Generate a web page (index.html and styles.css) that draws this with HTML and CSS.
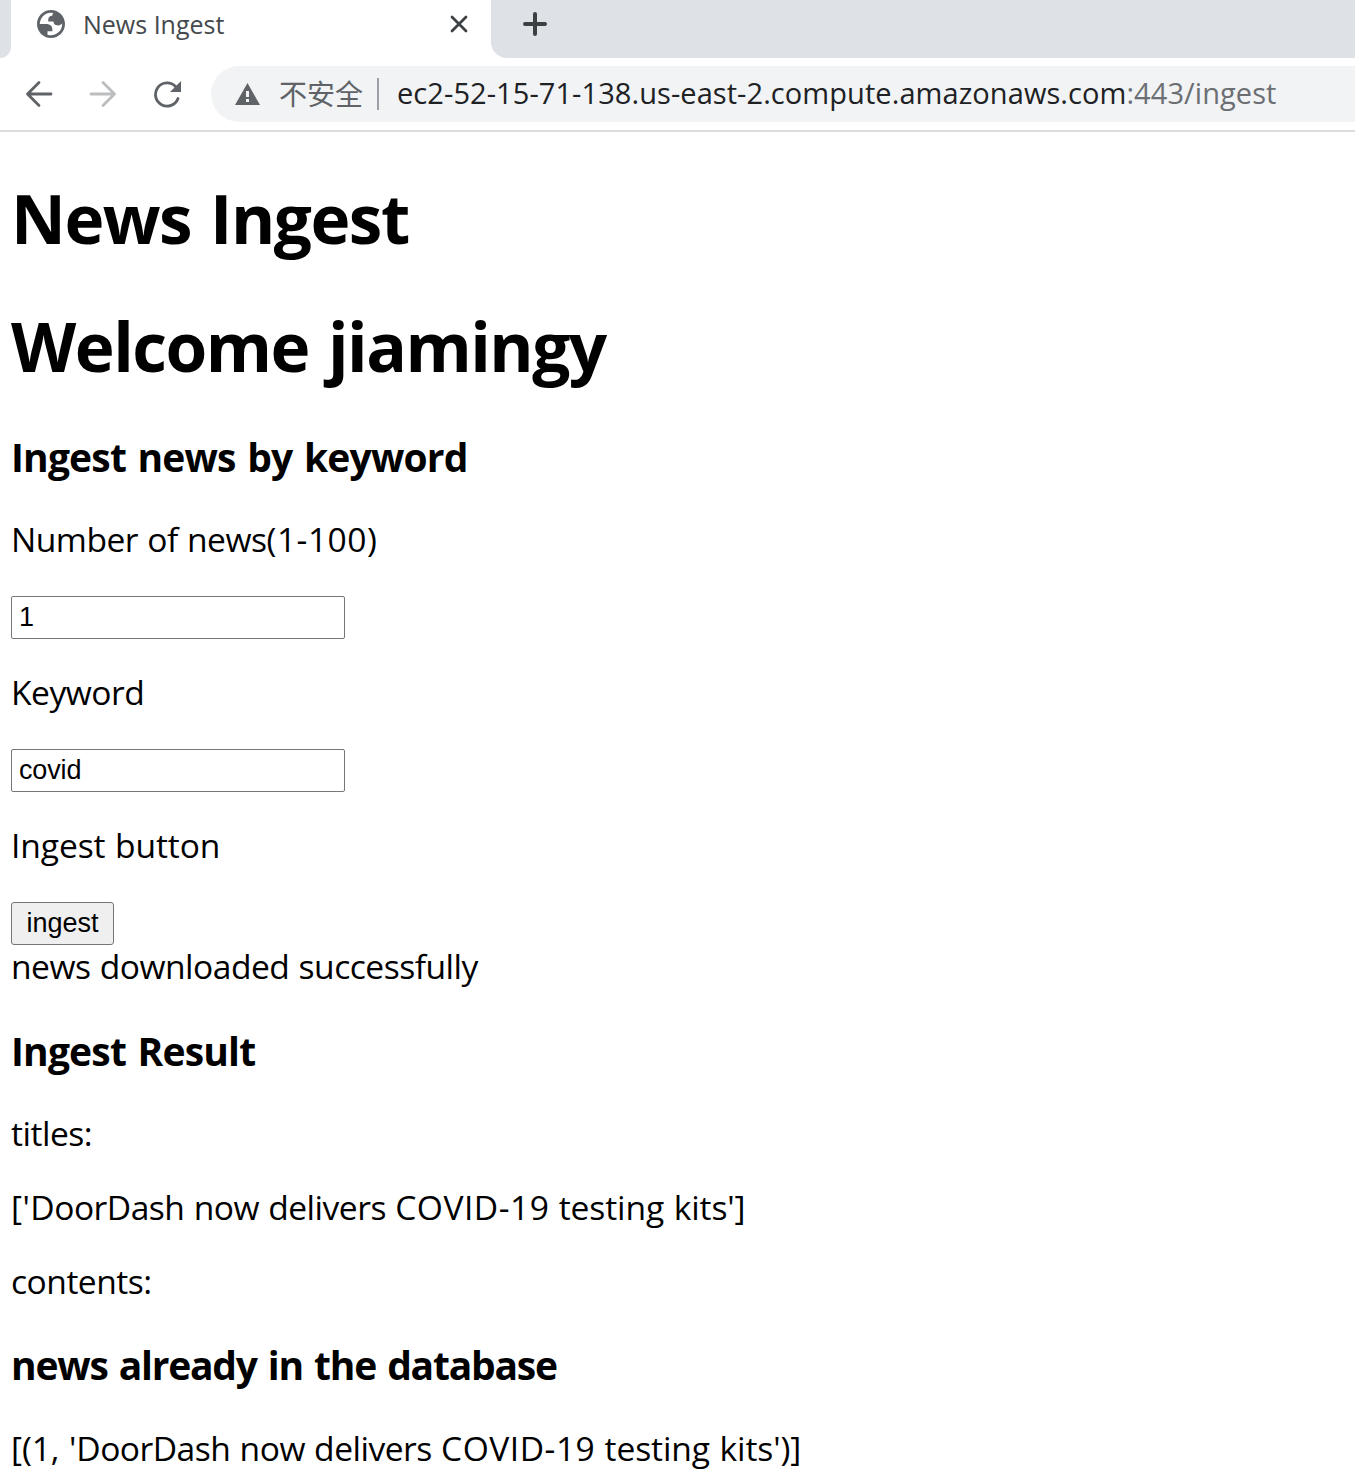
FILE: index.html
```html
<!DOCTYPE html>
<html lang="en">
<head>
<meta charset="utf-8">
<title>News Ingest</title>
<link rel="stylesheet" href="styles.css">
</head>
<body>
<header class="browser">
  <div class="tabs">
    <div class="tab-prev"></div>
    <div class="tab">
      <svg class="globe" viewBox="2 2 20 20"><path fill="#5f6368" fill-rule="evenodd" d="M12 2C6.480 2 2 6.480 2 12s4.480 10 10 10 10-4.480 10-10S17.520 2 12 2zM4 12h4.400c3.407.022 4.922 1.730 4.543 5.127H9.488v2.470a8.004 8.004 0 0 0 10.498-8.083C19.327 12.504 18.332 13 17 13c-2.137 0-3.206-.916-3.206-2.750h-3.748c-.274-2.728.683-4.092 2.870-4.092 0-.975.327-1.597.811-1.970A8.004 8.004 0 0 0 4 12z"/></svg>
      <span class="tab-title">News Ingest</span>
      <svg class="close" viewBox="0 0 18 18"><path d="M2 2l14 14M16 2L2 16"/></svg>
    </div>
    <div class="tab-next"><svg class="plus" viewBox="0 0 24 24"><path d="M12 2v20M2 12h20"/></svg></div>
  </div>
  <div class="toolbar">
    <svg class="nav" viewBox="0 0 28 28"><path d="M26 14H3M14 2.500L2.500 14L14 25.500"/></svg>
    <svg class="nav off" viewBox="0 0 28 28"><path d="M2 14H25M14 2.500L25.500 14L14 25.500"/></svg>
    <svg class="nav" viewBox="0 0 28 28"><path d="M25 18.500A11.600 11.600 0 1 1 22.500 6.500"/><path class="solid" d="M28 1V12H17z"/></svg>
    <div class="omnibox">
      <svg class="warn" viewBox="0 0 25 22"><path fill="#5f6368" d="M12.500 0L25 22H0z"/><path fill="#f1f3f4" d="M11 8h3v6h-3zM11 16h3v3h-3z"/></svg>
      <span class="insecure">不安全</span>
      <span class="sep"></span>
      <span class="url">ec2-52-15-71-138.us-east-2.compute.amazonaws.com<span class="path">:443/ingest</span></span>
    </div>
  </div>
</header>
<main class="page">
  <h1>News Ingest</h1>
  <h1>Welcome jiamingy</h1>
  <h3>Ingest news by keyword</h3>
  <p>Number of news<span class="wide">(1-100)</span></p>
  <input class="field" type="text" value="1">
  <p class="label">Keyword</p>
  <input class="field" type="text" value="covid">
  <p class="label"><span class="even">Ingest button</span></p>
  <button class="submit">ingest</button>
  <div class="status">news downloaded successfully</div>
  <h3>Ingest Result</h3>
  <p>titles:</p>
  <p><span class="wide">['</span>DoorDash now delivers <span class="wide">COVID-19</span> <span class="even">testing kits']</span></p>
  <p>contents:</p>
  <h3 class="stored">news already in the database</h3>
  <p><span class="even">[(1, '</span>DoorDash now delivers <span class="wide">COVID-19</span> <span class="even">testing kits')]</span></p>
</main>
</body>
</html>
```
FILE: styles.css
```css
* { box-sizing: border-box; }
body {
  margin: 0;
  height: 1476px;
  overflow: hidden;
  background: #fff;
  color: #000;
  font-family: "Open Sans", "Noto Sans", "Noto Sans CJK SC", sans-serif;
}
svg { display: block; flex: none; }

/* Browser chrome */
.browser { height: 132px; border-bottom: 2px solid #dadce0; }
.tabs { display: flex; height: 58px; }
.tab-prev { width: 11px; background: #dee1e6; border-bottom-right-radius: 14px; }
.tab { display: flex; align-items: center; width: 480px; padding: 0 23px 10px 26px; }
.tab-next { flex: 1; padding: 12px 0 0 32px; background: #dee1e6; border-bottom-left-radius: 16px; }
.globe { width: 28px; height: 28px; }
.tab-title { flex: 1; margin-left: 18px; color: #45494d; font-size: 25px; line-height: 36px; }
.close { width: 18px; height: 18px; }
.plus { width: 24px; height: 24px; }
.close path, .plus path { fill: none; stroke: #3c4043; stroke-linecap: round; }
.close path { stroke-width: 2.8; }
.plus path { stroke-width: 4; }
.toolbar { display: flex; align-items: center; height: 72px; padding-left: 25px; }
.nav { width: 28px; height: 28px; margin-right: 36px; }
.nav path { fill: none; stroke: #5f6368; stroke-width: 2.8; stroke-linecap: round; stroke-linejoin: round; }
.nav .solid { fill: #5f6368; stroke: none; }
.off { opacity: .42; }
.omnibox { display: flex; flex: 1; align-items: center; height: 56px; margin-left: -6px; padding-left: 24px; background: #f1f3f4; border-radius: 28px 0 0 28px; white-space: nowrap; }
.warn { width: 25px; height: 22px; }
.insecure { margin-left: 19px; padding-bottom: 2px; color: #5f6368; font: 28px/40px "Noto Sans CJK SC", sans-serif; }
.sep { width: 2px; height: 32px; margin: 0 18px 0 14px; background: #9aa0a6; }
.url { padding-bottom: 2px; color: #202124; font-size: 29px; line-height: 40px; letter-spacing: .07px; }
.path { color: #6b6f73; }

/* Page content */
.page { padding: 44px 11px 0; white-space: nowrap; }
h1 { margin: 0 0 44px; font-size: 67.5px; line-height: 84px; letter-spacing: -1.5px; word-spacing: 3px; }
h3 { margin: 0 0 36px; font-size: 39px; line-height: 50px; letter-spacing: -.82px; word-spacing: 2.2px; }
p, .status { font-size: 33.6px; line-height: 42px; letter-spacing: -.5px; word-spacing: 1px; }
p { margin: 0 0 32px; }
p + h3 { margin-top: 38px; }
.stored { margin-bottom: 37px; letter-spacing: -1.22px; }
.label, h3 + p:has(+ .field) { margin-bottom: 36px; }
.wide { letter-spacing: .5px; }
.even { letter-spacing: -.1px; }
.field, .submit { display: block; height: 43px; border: 1px solid #767676; color: #000; font: 27px "Liberation Sans", Arial, sans-serif; }
.field { width: 334px; margin: 0 0 32px; padding: 0 7px; border-radius: 2px; background: #fff; letter-spacing: -.15px; }
.submit { width: 103px; padding: 0; border-radius: 3px; background: #efefef; }
.status { margin-bottom: 39px; }
```
